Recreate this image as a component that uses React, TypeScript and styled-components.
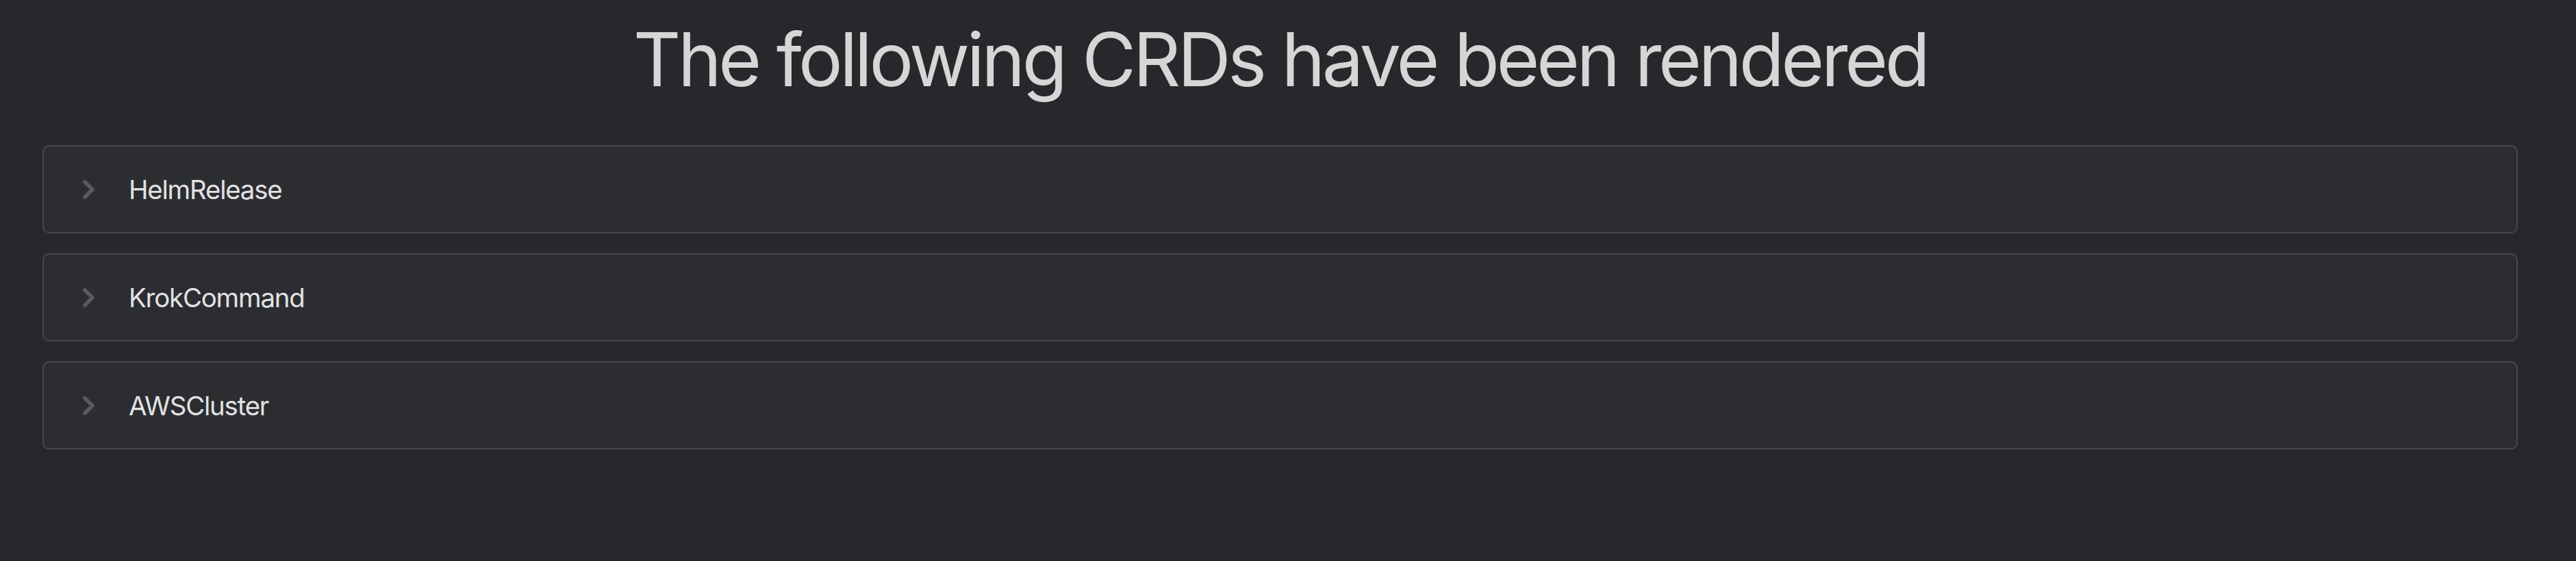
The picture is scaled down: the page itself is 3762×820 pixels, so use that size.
import React from "react";
import styled, { createGlobalStyle } from "styled-components";

const GlobalStyle = createGlobalStyle`
  html, body {
    margin: 0;
    padding: 0;
    background: #27282c;
  }
  body {
    font-family: Inter, "Noto Sans", "Liberation Sans", sans-serif;
    min-height: 820px;
  }
`;

const Page = styled.main`
  box-sizing: border-box;
  width: 100%;
  min-height: 820px;
  padding: 0 85px 0 62px;
  background: #27282c;
`;

const Title = styled.h1`
  margin: 0;
  padding-top: 22px;
  height: 190px;
  box-sizing: border-box;
  text-align: center;
  font-size: 108px;
  font-weight: 400;
  line-height: 130px;
  letter-spacing: -4.5px;
  color: #d6d6d6;
`;

const List = styled.div`
  display: flex;
  flex-direction: column;
  gap: 29px;
  padding-top: 22px;
`;

const Item = styled.div`
  box-sizing: border-box;
  height: 129px;
  display: flex;
  align-items: center;
  padding-left: 56px;
  border: 2.4px solid #47484d;
  border-radius: 10px;
  background: #2c2d31;
`;

const Chevron = styled.svg`
  width: 20px;
  height: 30px;
  flex: none;
  color: #5a5b5f;
`;

const Label = styled.span`
  margin-left: 48px;
  font-size: 38.4px;
  font-weight: 400;
  color: #e2e2e4;
  letter-spacing: -1.2px;
`;

const items = ["HelmRelease", "KrokCommand", "AWSCluster"];

export default function App() {
  return (
    <>
      <GlobalStyle />
      <Page>
        <Title>The following CRDs have been rendered</Title>
        <List>
          {items.map((name) => (
            <Item key={name}>
              <Chevron viewBox="0 0 20 30" fill="none">
                <polyline
                  points="4,4 15,15 4,26"
                  stroke="currentColor"
                  strokeWidth="5.5"
                  strokeLinecap="round"
                  strokeLinejoin="round"
                />
              </Chevron>
              <Label>{name}</Label>
            </Item>
          ))}
        </List>
      </Page>
    </>
  );
}
